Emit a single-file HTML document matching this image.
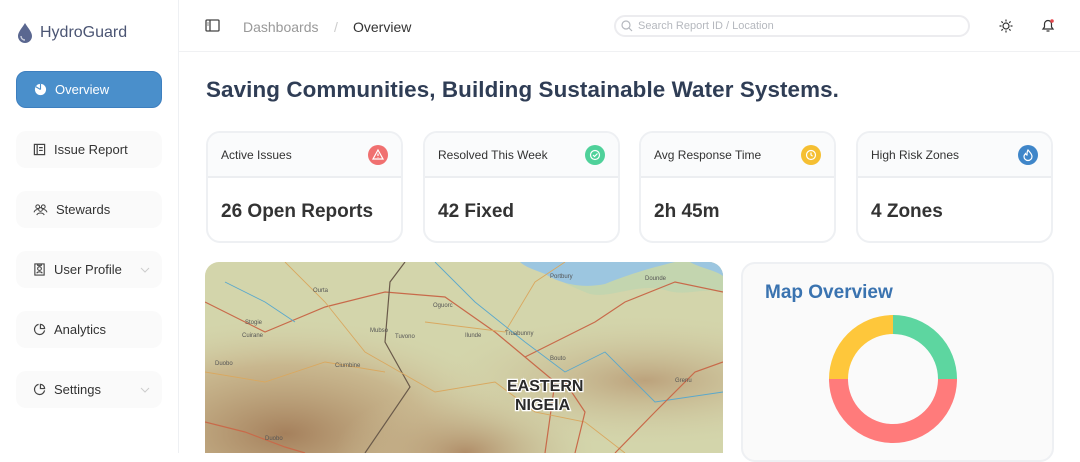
<!DOCTYPE html>
<html><head><meta charset="utf-8">
<style>
*{box-sizing:border-box;margin:0;padding:0}
body{width:1080px;height:453px;overflow:hidden;background:#fff;font-family:"Liberation Sans",sans-serif;color:#333;position:relative}
.side{position:absolute;left:0;top:0;width:179px;height:453px;border-right:1px solid #eef0f3;background:#fff}
.logo{position:absolute;left:16px;top:22px;display:flex;align-items:center;gap:6px;font-size:16px;color:#4b5573}
.nav{position:absolute;left:16px;width:146px;height:37px;border-radius:10px;background:#fafafa;display:flex;align-items:center;padding-left:17px;font-size:13px;color:#333;gap:8px}
.nav.active{background:#4a8fcb;color:#fff;border:1px solid #3d7fbf}
.nav .chev{position:absolute;right:12px;top:16px}
.top{position:absolute;left:179px;top:0;right:0;height:52px;border-bottom:1px solid #f0f1f3}
.crumb{position:absolute;top:19px;font-size:14px}
.search{position:absolute;left:614px;top:15px;width:356px;height:22px;border:2px solid #ececef;border-radius:12px;font-size:11px;color:#b5b8be;padding-left:22px;line-height:18px}
h1{position:absolute;left:206px;top:77px;font-size:22.4px;color:#2f3d55;font-weight:700;letter-spacing:.1px}
.card{position:absolute;top:131px;width:197px;height:112px;border:2px solid #eef0f3;border-radius:14px;overflow:hidden}
.card .hd{height:45px;background:#fafbfc;border-bottom:2px solid #eceef1;font-size:12px;padding:15px 0 0 13px;position:relative;color:#333}
.card .ic{position:absolute;right:13px;top:12px;width:20px;height:20px;border-radius:50%}
.card .v{font-size:19px;font-weight:700;padding:23px 0 0 13px;color:#333}
.mapov{position:absolute;left:741px;top:262px;width:313px;height:200px;border:2px solid #eef0f3;border-radius:14px;background:#fafafa}
</style></head><body>
<div class="side">
 <div class="logo"><svg width="18" height="22" viewBox="0 0 18 22"><path d="M9 1C6 6 2 10 2 14a7 7 0 0 0 14 0C16 10 12 6 9 1z" fill="#5a6790"/><path d="M5 14a4 4 0 0 0 4 4" stroke="#fff" stroke-width="1.4" fill="none" opacity=".7"/></svg>HydroGuard</div>
 <div class="nav active" style="top:71px"><svg width="13" height="13" viewBox="0 0 14 14"><circle cx="7" cy="7" r="6" fill="#fff"/><path d="M7 7V1M7 7L2 4" stroke="#4a8fcb" stroke-width="1.2"/></svg>Overview</div>
 <div class="nav" style="top:131px"><svg width="13" height="13" viewBox="0 0 14 14" fill="none" stroke="#444" stroke-width="1.3"><rect x="1.5" y="1.5" width="11" height="11"/><path d="M4.5 1.5v11M6.5 5h4M6.5 8h4"/></svg>Issue Report</div>
 <div class="nav" style="top:191px"><svg width="15" height="13" viewBox="0 0 16 14" fill="none" stroke="#444" stroke-width="1.1"><circle cx="5" cy="4" r="2"/><circle cx="11" cy="4" r="2"/><circle cx="8" cy="7" r="2"/><path d="M1 10c1-3 3-3 4-3M15 10c-1-3-3-3-4-3M4 13c1-3 7-3 8 0"/></svg>Stewards</div>
 <div class="nav" style="top:251px"><svg width="13" height="13" viewBox="0 0 14 14" fill="none" stroke="#444" stroke-width="1.2"><rect x="2" y="1" width="10" height="12"/><circle cx="7" cy="6" r="2"/><path d="M4 11c1-2 5-2 6 0M5 1v1.5h4V1"/></svg>User Profile<svg class="chev" width="10" height="6" viewBox="0 0 10 6"><path d="M1 1l4 4 4-4" stroke="#ccc" fill="none"/></svg></div>
 <div class="nav" style="top:311px"><svg width="13" height="13" viewBox="0 0 14 14" fill="none" stroke="#444" stroke-width="1.3"><path d="M12.5 8A5.5 5.5 0 1 1 6 1.5"/><path d="M8 1.5A4.5 4.5 0 0 1 12.5 6H8z"/></svg>Analytics</div>
 <div class="nav" style="top:371px"><svg width="13" height="13" viewBox="0 0 14 14" fill="none" stroke="#444" stroke-width="1.3"><path d="M12.5 8A5.5 5.5 0 1 1 6 1.5"/><path d="M8 1.5A4.5 4.5 0 0 1 12.5 6H8z"/></svg>Settings<svg class="chev" width="10" height="6" viewBox="0 0 10 6"><path d="M1 1l4 4 4-4" stroke="#ccc" fill="none"/></svg></div>
</div>
<div class="top">
 <svg style="position:absolute;left:26px;top:19px" width="15" height="13" viewBox="0 0 15 13" fill="none" stroke="#444" stroke-width="1.3"><rect x="1" y="1" width="13" height="11" rx="1"/><path d="M5 1v11M2.5 4h1M2.5 6h1"/></svg>
 <span class="crumb" style="left:64px;color:#999">Dashboards</span>
 <span class="crumb" style="left:155px;color:#ccc">/</span>
 <span class="crumb" style="left:174px;color:#333">Overview</span>
</div>
<div class="search"><svg style="position:absolute;left:5px;top:3px" width="12" height="12" viewBox="0 0 12 12" fill="none" stroke="#b5b8be" stroke-width="1.2"><circle cx="5" cy="5" r="4"/><path d="M8 8l3 3"/></svg>Search Report ID / Location</div>
<svg style="position:absolute;left:999px;top:19px" width="14" height="14" viewBox="0 0 14 14" fill="none" stroke="#333" stroke-width="1.2"><circle cx="7" cy="7" r="3"/><path d="M7 0.5v2M7 11.5v2M0.5 7h2M11.5 7h2M2.4 2.4l1.4 1.4M10.2 10.2l1.4 1.4M2.4 11.6l1.4-1.4M10.2 3.8l1.4-1.4"/></svg>
<svg style="position:absolute;left:1041px;top:18px" width="14" height="15" viewBox="0 0 14 15" fill="none" stroke="#333" stroke-width="1.2"><path d="M2 11h10l-1.5-2V6a3.5 3.5 0 0 0-7 0v3z"/><path d="M5.5 13h3"/><circle cx="11" cy="3" r="1.8" fill="#e5484d" stroke="none"/></svg>
<h1>Saving Communities, Building Sustainable Water Systems.</h1>
<div class="card" style="left:206px"><div class="hd">Active Issues<div class="ic" style="background:#f07070"><svg width="20" height="20" viewBox="0 0 20 20" fill="none" stroke="#fff" stroke-width="1.2"><path d="M10 5l5 9H5z"/><path d="M10 8.5v2.5M10 12.3v.4"/></svg></div></div><div class="v">26 Open Reports</div></div>
<div class="card" style="left:423px"><div class="hd">Resolved This Week<div class="ic" style="background:#4fd19a"><svg width="20" height="20" viewBox="0 0 20 20" fill="none" stroke="#fff" stroke-width="1.2"><circle cx="10" cy="10" r="4.5"/><path d="M8 10l1.5 1.5L12.5 8.5"/></svg></div></div><div class="v">42 Fixed</div></div>
<div class="card" style="left:639px"><div class="hd">Avg Response Time<div class="ic" style="background:#f5bf32"><svg width="20" height="20" viewBox="0 0 20 20" fill="none" stroke="#fff" stroke-width="1.2"><circle cx="10" cy="10" r="4.5"/><path d="M10 7.5V10l1.6 1.2"/></svg></div></div><div class="v">2h 45m</div></div>
<div class="card" style="left:856px"><div class="hd">High Risk Zones<div class="ic" style="background:#3f86c9"><svg width="20" height="20" viewBox="0 0 20 20" fill="none" stroke="#fff" stroke-width="1.2"><path d="M10 5c2 2.5 4 4 4 6.5a4 4 0 0 1-8 0c0-1.5 1-2.5 1.5-3 .3 1 .8 1.5 1.5 1.5 0-2 0-3.5 1-5z"/></svg></div></div><div class="v">4 Zones</div></div>

<svg style="position:absolute;left:205px;top:262px" width="518" height="191" viewBox="0 0 518 191">
<defs>
<clipPath id="c"><path d="M14 0H504a14 14 0 0 1 14 14V191H0V14A14 14 0 0 1 14 0z"/></clipPath>
<radialGradient id="m1" cx="0.2" cy="0.9" r="0.6"><stop offset="0" stop-color="#a5805c"/><stop offset="0.6" stop-color="#c4aa82" stop-opacity=".7"/><stop offset="1" stop-color="#d3cba4" stop-opacity="0"/></radialGradient>
<radialGradient id="m2" cx="0.5" cy="1" r="0.5"><stop offset="0" stop-color="#b08d68"/><stop offset="1" stop-color="#cfc39c" stop-opacity="0"/></radialGradient>
<radialGradient id="m3" cx="0.85" cy="0.55" r="0.4"><stop offset="0" stop-color="#bca27c"/><stop offset="1" stop-color="#d3cba4" stop-opacity="0"/></radialGradient>
</defs>
<g clip-path="url(#c)">
<rect width="518" height="191" fill="#d3d5ab"/>
<rect x="0" y="30" width="518" height="161" fill="url(#m3)"/>
<rect x="0" y="0" width="400" height="191" fill="url(#m1)"/>
<rect x="130" y="60" width="260" height="131" fill="url(#m2)"/>
<path d="M340 0H518V30C500 25 480 35 460 28 430 20 400 40 380 30 360 22 345 15 340 0z" fill="#bcd4b0" opacity=".7"/>
<path d="M315 0H470C450 5 430 10 400 22 370 28 350 18 340 12 330 8 320 5 315 0z" fill="#9cc6e0"/>
<path d="M485 0H518V14C510 8 495 6 485 0z" fill="#9cc6e0"/>
<g fill="none" stroke-width="1.2">
<path d="M0 40 60 70 120 45 180 30 240 35 290 70 320 95 350 120 340 191" stroke="#c86a4a"/>
<path d="M200 0 185 20 180 80 205 125 160 191" stroke="#6a5a4a"/>
<path d="M0 160 40 170 80 185 100 191" stroke="#c86a4a"/>
<path d="M320 95 390 60 420 40 470 20 518 30" stroke="#c86a4a"/>
<path d="M80 0 120 40 160 90 230 130 290 120 330 150 380 160 420 191" stroke="#d9a860" stroke-width=".9"/>
<path d="M220 60 300 70 330 20 360 0M0 110 60 120 120 100 180 110" stroke="#d9a860" stroke-width=".9"/>
<path d="M230 0 270 40 320 80 360 110 400 90 450 140 518 130M20 20 60 40 90 60" stroke="#5aa8cc" stroke-width=".9"/>
<path d="M410 191 450 150 490 110 518 100M370 191 380 150 360 120" stroke="#c86a4a"/>
</g>
<g font-size="6" fill="#555" font-family="Liberation Sans">
<text x="345" y="16">Portbury</text><text x="40" y="62">Stogie</text><text x="37" y="75">Cuirane</text><text x="108" y="30">Ourta</text><text x="190" y="76">Tuvono</text><text x="165" y="70">Mubso</text><text x="260" y="75">Ilunde</text><text x="300" y="73">Truabunny</text><text x="228" y="45">Oguorc</text><text x="10" y="103">Duobo</text><text x="60" y="178">Duobo</text><text x="130" y="105">Ciumbine</text><text x="345" y="98">Bouto</text><text x="440" y="18">Dounde</text><text x="470" y="120">Grenu</text>
</g>
<text x="302" y="129" font-size="16" font-weight="700" fill="#2a2a2a" stroke="#fff" stroke-width="2.5" paint-order="stroke" font-family="Liberation Sans">EASTERN</text>
<text x="310" y="148" font-size="16" font-weight="700" fill="#2a2a2a" stroke="#fff" stroke-width="2.5" paint-order="stroke" font-family="Liberation Sans">NIGEIA</text>
</g></svg>

<div class="mapov">
 <div style="position:absolute;left:22px;top:18px;font-size:19px;font-weight:700;color:#3a73b0">Map Overview</div>
 <svg style="position:absolute;left:86px;top:51px" width="128" height="128" viewBox="0 0 128 128">
  <g fill="none" stroke-width="19">
   <path d="M64 9.5A54.5 54.5 0 0 1 118.5 64" stroke="#5dd6a0"/>
   <path d="M118.5 64A54.5 54.5 0 0 1 9.5 64" stroke="#ff7b7b"/>
   <path d="M9.5 64A54.5 54.5 0 0 1 64 9.5" stroke="#fec73b"/>
  </g>
 </svg>
</div>
</body></html>
